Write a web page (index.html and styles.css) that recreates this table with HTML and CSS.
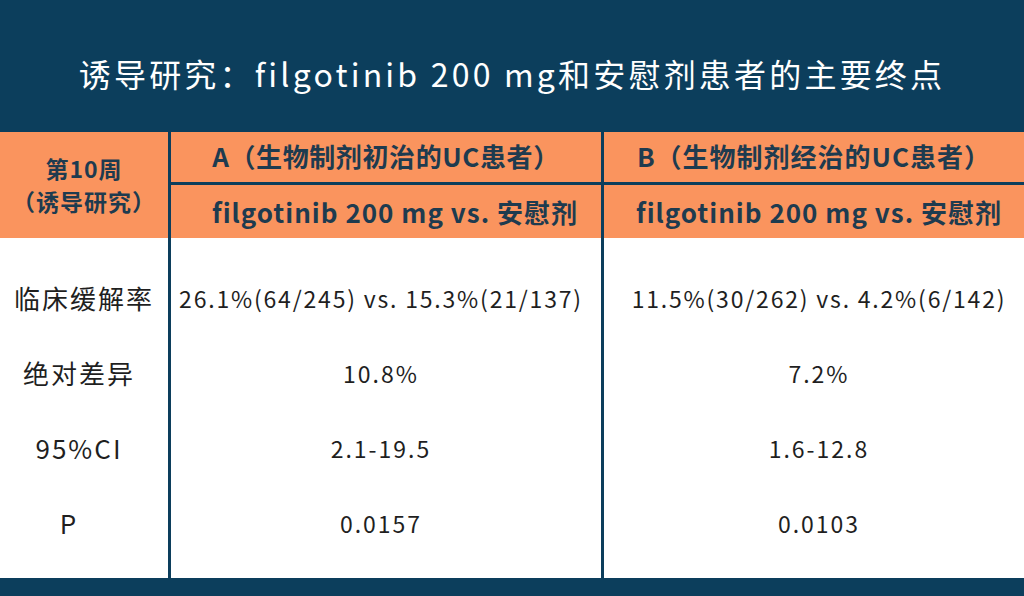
FILE: index.html
```html
<!DOCTYPE html>
<html lang="zh">
<head>
<meta charset="utf-8">
<link rel="stylesheet" href="styles.css">
</head>
<body>
<div class="page">
  <header class="title">诱导研究：filgotinib 200 mg和安慰剂患者的主要终点</header>
  <div class="thead">
    <div class="hcell week">第10周<br>（诱导研究）</div>
    <div class="hcell grp grp-a">A（生物制剂初治的UC患者）</div>
    <div class="hcell grp grp-b">B（生物制剂经治的UC患者）</div>
    <div class="hcell cmp cmp-a">filgotinib 200 mg vs. 安慰剂</div>
    <div class="hcell cmp cmp-b">filgotinib 200 mg vs. 安慰剂</div>
  </div>
  <div class="tbody">
    <div class="cell label">临床缓解率</div>
    <div class="cell val a">26.1%(64/245) vs. 15.3%(21/137)</div>
    <div class="cell val b">11.5%(30/262) vs. 4.2%(6/142)</div>

    <div class="cell label">绝对差异</div>
    <div class="cell val a">10.8%</div>
    <div class="cell val b">7.2%</div>

    <div class="cell label">95%CI</div>
    <div class="cell val a">2.1-19.5</div>
    <div class="cell val b">1.6-12.8</div>

    <div class="cell label label-p">P</div>
    <div class="cell val a">0.0157</div>
    <div class="cell val b">0.0103</div>
  </div>
  <div class="footer"></div>
</div>
</body>
</html>
```
FILE: styles.css
```css
* { box-sizing: border-box; }
html, body { margin: 0; padding: 0; }
body {
  width: 1024px;
  height: 596px;
  overflow: hidden;
  background: #ffffff;
  font-family: "Noto Sans CJK SC", "Noto Sans", sans-serif;
}
.page { display: flex; flex-direction: column; width: 1024px; height: 596px; }
.title {
  height: 132px;
  background: #0c3e5c;
  color: #ffffff;
  font-size: 32px;
  letter-spacing: 3.2px;
  display: flex;
  align-items: center;
  justify-content: center;
  padding-top: 14px;
}
.thead {
  display: grid;
  grid-template-columns: 168px 430px 420px;
  grid-template-rows: 50px 53px;
  column-gap: 3px;
  row-gap: 3px;
  background: #0c3e5c;
}
.hcell {
  background: #fa945e;
  color: #1e3b4f;
  font-weight: 700;
  font-size: 26px;
  letter-spacing: 1px;
  display: flex;
  align-items: center;
  justify-content: center;
  text-align: center;
}
.week {
  grid-row: span 2;
  line-height: 33px;
  letter-spacing: 1px;
  font-size: 23px;
}
.grp { padding-bottom: 3px; }
.grp-a { letter-spacing: 0.6px; }
.cmp-a { padding-left: 18px; }
.cmp-b { padding-left: 10px; }
.tbody {
  flex: 1;
  display: grid;
  grid-template-columns: 168px 430px 420px;
  grid-template-rows: 97px 75px 75px 93px;
  column-gap: 3px;
  background: #0c3e5c;
}
.cell {
  background: #ffffff;
  color: #1f1f1f;
  font-size: 23px;
  letter-spacing: 2px;
  display: flex;
  align-items: center;
  justify-content: center;
}
.cell:nth-child(-n+3) { padding-top: 22px; letter-spacing: 1.8px; }
.cell:nth-last-child(-n+3) { padding-bottom: 18px; }
.label { font-size: 26px; letter-spacing: 2px; padding-right: 10px; }
.cell.label:nth-child(1) { letter-spacing: 2px; padding-right: 0; }
.label-p { padding-right: 30px; }
.val.a { padding-right: 10px; }
.val.b { padding-left: 10px; }
.footer { height: 18px; background: #0c3e5c; }
```
